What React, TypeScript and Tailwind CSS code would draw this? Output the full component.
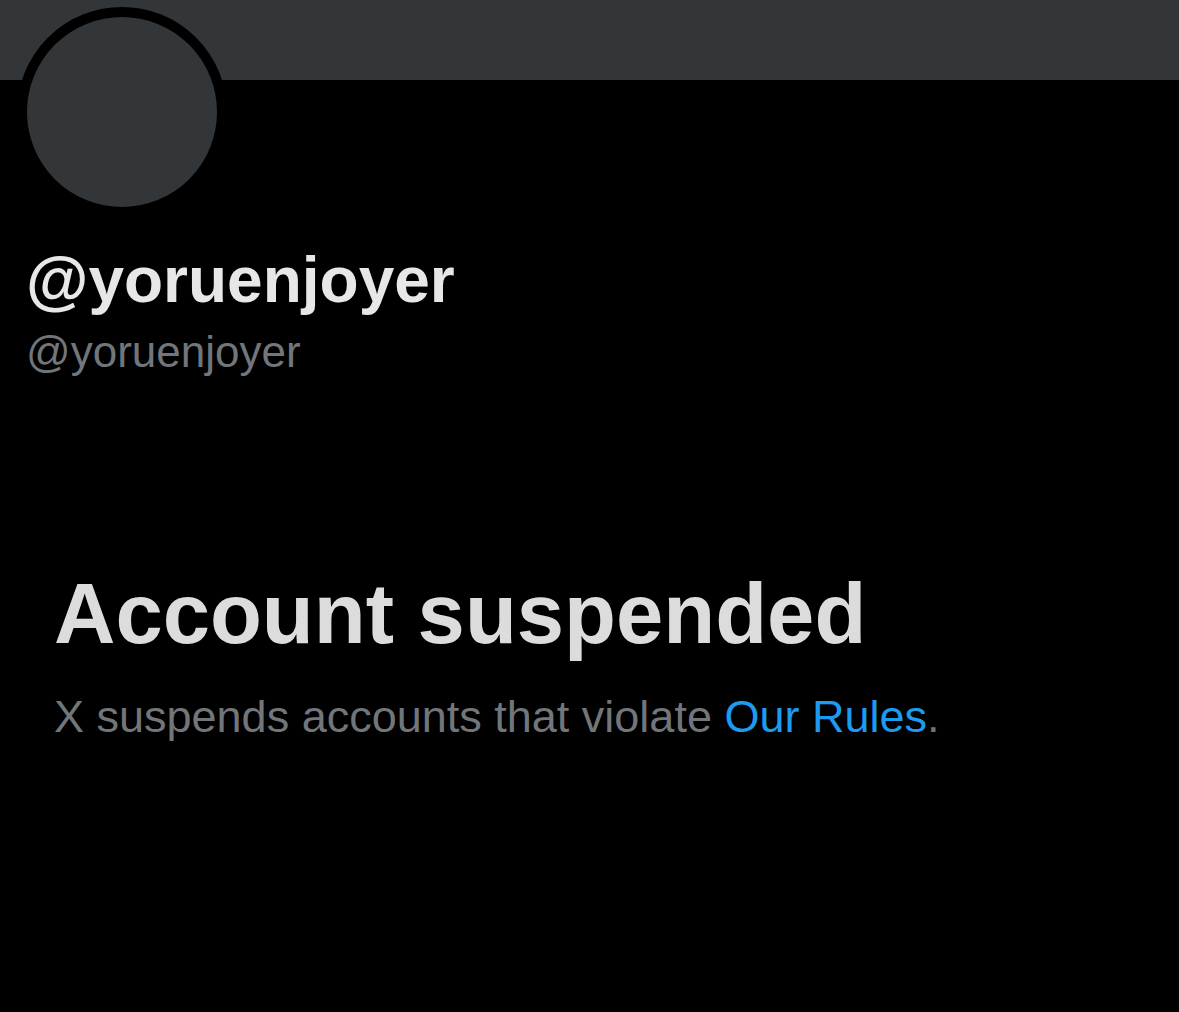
import React from 'react';

const App: React.FC = () => {
  return (
    <div className="min-h-screen w-full bg-black font-['Liberation_Sans',Arial,sans-serif]">
      {/* banner */}
      <div className="h-[80px] w-full bg-[#333639]" />

      {/* avatar */}
      <div className="pl-[17px]">
        <div className="-mt-[73px] h-[210px] w-[210px] rounded-full border-[10px] border-black bg-[#333639]" />
      </div>

      {/* names */}
      <div className="pl-[26px] pt-[31px]">
        <h1 className="text-[64px] font-bold leading-none text-[#e7e7e7]">@yoruenjoyer</h1>
        <p className="mt-[18px] text-[44px] leading-none text-[#71767b]">@yoruenjoyer</p>
      </div>

      {/* suspended notice */}
      <div className="pl-[54px] pt-[197px]">
        <h2 className="text-[85px] font-bold leading-none text-[#dcdcdc]">Account suspended</h2>
        <p className="mt-[38px] text-[45px] leading-none text-[#71767b]">
          X suspends accounts that violate <span className="text-[#1d9bf0]">Our Rules</span>.
        </p>
      </div>
    </div>
  );
};

export default App;
